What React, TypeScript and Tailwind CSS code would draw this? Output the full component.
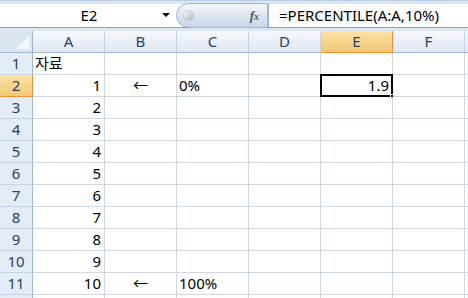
const cols = ["A", "B", "C", "D", "E", "F", "G"];

type Row = { n: number; a?: string; b?: string; c?: string; e?: string };

const rows: Row[] = [
  { n: 1, a: "자료" },
  { n: 2, a: "1", b: "←", c: "0%", e: "1.9" },
  { n: 3, a: "2" },
  { n: 4, a: "3" },
  { n: 5, a: "4" },
  { n: 6, a: "5" },
  { n: 7, a: "6" },
  { n: 8, a: "7" },
  { n: 9, a: "8" },
  { n: 10, a: "9" },
  { n: 11, a: "10", b: "←", c: "100%" },
  { n: 12 },
];

const font = "font-['Noto_Sans','Noto_Sans_CJK_KR',sans-serif]";

function FormulaBar() {
  return (
    <div className="h-[31px] bg-[#dde7f3] pt-[3px] border-t border-[#b9cce4]">
      <div className="flex h-[24px] bg-white border-b border-[#8aa1bf]">
        {/* name box */}
        <div className="relative w-[176px] flex items-center justify-center">
          <span className={`${font} text-[15px] text-black pl-[2px]`}>E2</span>
          <span className="absolute right-[6px] top-[9px] w-0 h-0 border-l-[4px] border-r-[4px] border-t-[4px] border-l-transparent border-r-transparent border-t-black" />
        </div>
        {/* fx pill */}
        <div className="w-[92px] flex items-center rounded-l-full border border-[#9fb5d3] bg-gradient-to-b from-[#f3f7fc] via-[#dce6f3] to-[#c8d7ea] -mt-[1px] h-[25px]">
          <span className="ml-[6px] w-[11px] h-[11px] rounded-full bg-gradient-to-br from-white to-[#a9b3bf] border border-[#c3ccd6]" />
          <span className="ml-auto mr-[8px] font-['Liberation_Serif',serif] italic font-bold text-[13px] text-[#555] leading-none">
            f<span className="text-[10px]">x</span>
          </span>
        </div>
        {/* formula input */}
        <div className="flex-1 flex items-center pl-[10px] border-l border-[#9fb5d3]">
          <span className={`${font} text-[15px] text-black`}>=PERCENTILE(A:A,10%)</span>
        </div>
      </div>
    </div>
  );
}

function Cell({
  text,
  align,
  selected,
}: {
  text?: string;
  align: "left" | "right" | "center";
  selected?: boolean;
}) {
  const j = align === "right" ? "justify-end pr-[3px]" : align === "center" ? "justify-center" : "justify-start pl-[2px]";
  return (
    <div className={`relative flex items-center ${j} border-r border-b border-[#d0d7e5] bg-white`}>
      {text && <span className={`${font} text-[15px] leading-none text-black`}>{text}</span>}
      {selected && (
        <>
          <span className="absolute -left-[1px] -top-[1px] right-[-1px] bottom-[-1px] border-[2.5px] border-black" />
          <span className="absolute right-[-4px] bottom-[-4px] w-[6px] h-[6px] bg-black border border-white" />
        </>
      )}
    </div>
  );
}

export default function App() {
  return (
    <div className="w-[468px] h-[298px] overflow-hidden bg-white">
      <FormulaBar />
      <div className="grid grid-cols-[33px_repeat(7,72px)] auto-rows-[22px] bg-white">
        {/* corner */}
        <div className="relative bg-[#dbe5f1] border-r border-b border-[#9eb6ce]">
          <span className="absolute right-[3px] bottom-[3px] w-0 h-0 border-b-[13px] border-l-[13px] border-b-[#f4f8fc] border-l-transparent" />
        </div>
        {cols.map((c) =>
          c === "E" ? (
            <div
              key={c}
              className={`flex items-center justify-center bg-gradient-to-b from-[#fbe3a6] to-[#f2c774] border-r border-b border-[#f29436] ${font} text-[15px] text-[#27415f]`}
            >
              {c}
            </div>
          ) : (
            <div
              key={c}
              className={`flex items-center justify-center bg-gradient-to-b from-[#f6f9fd] to-[#dee7f2] border-r border-[#c5d3e4] border-b border-b-[#9eb6ce] ${font} text-[15px] text-[#27415f]`}
            >
              {c === "G" ? "" : c}
            </div>
          )
        )}
        {rows.map((r) => (
          <div key={r.n} className="contents">
            <div
              className={`flex items-center justify-center border-r border-b ${font} text-[15px] text-[#27415f] ${
                r.n === 2
                  ? "bg-gradient-to-b from-[#fbe3a6] to-[#f2c774] border-[#f29436]"
                  : "bg-[#e4ecf7] border-r-[#9eb6ce] border-b-[#c5d3e4]"
              }`}
            >
              {r.n === 12 ? "" : r.n}
            </div>
            <Cell text={r.a} align={r.n === 1 ? "left" : "right"} />
            <Cell text={r.b} align="center" />
            <Cell text={r.c} align="left" />
            <Cell align="left" />
            <Cell text={r.e} align="right" selected={r.n === 2} />
            <Cell align="left" />
            <Cell align="left" />
          </div>
        ))}
      </div>
    </div>
  );
}
